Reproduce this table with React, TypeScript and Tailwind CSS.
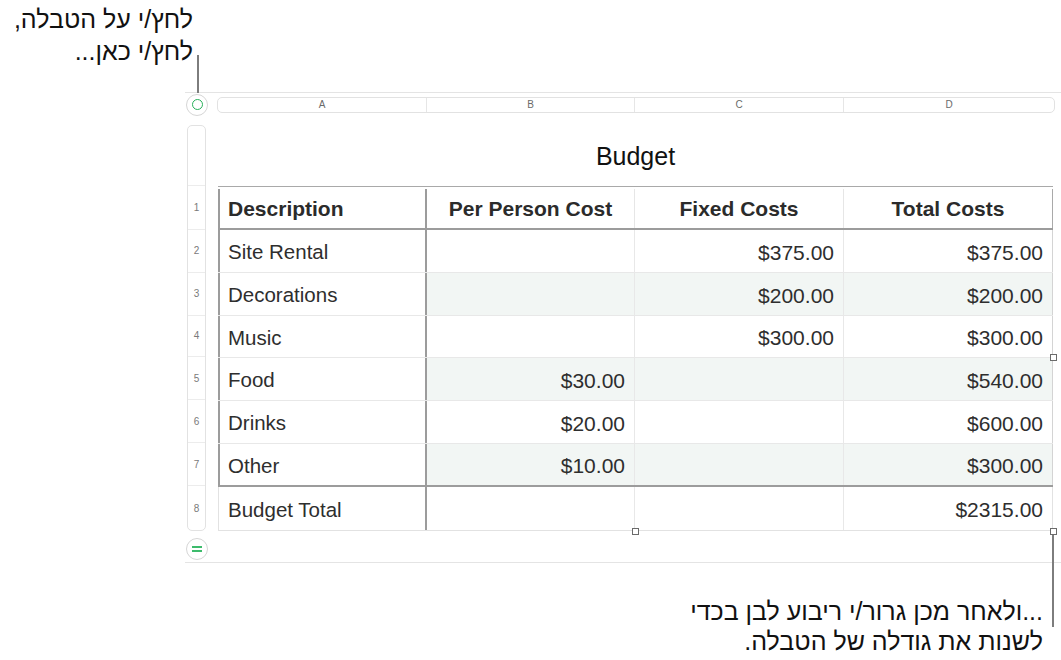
import React from "react";

type Row = {
  n: number;
  a: string;
  b: string;
  c: string;
  d: string;
  h: number;
  shade?: boolean;
};

const bodyRows: Row[] = [
  { n: 2, a: "Site Rental", b: "", c: "$375.00", d: "$375.00", h: 43 },
  { n: 3, a: "Decorations", b: "", c: "$200.00", d: "$200.00", h: 43, shade: true },
  { n: 4, a: "Music", b: "", c: "$300.00", d: "$300.00", h: 42 },
  { n: 5, a: "Food", b: "$30.00", c: "", d: "$540.00", h: 43, shade: true },
  { n: 6, a: "Drinks", b: "$20.00", c: "", d: "$600.00", h: 43 },
  { n: 7, a: "Other", b: "$10.00", c: "", d: "$300.00", h: 43, shade: true },
];

const rowHeights = [44, 43, 43, 42, 43, 43, 43, 44];

function Handle({ className }: { className: string }) {
  return (
    <div
      className={`absolute w-[7px] h-[7px] bg-white border border-[#6b6b6b] ${className}`}
    />
  );
}

export default function App() {
  return (
    <div className="relative w-[1061px] h-[660px] overflow-hidden bg-white font-['Liberation_Sans',_'Noto_Sans',_sans-serif] text-[#111]">
      {/* top callout */}
      <div
        dir="rtl"
        className="w-[193px] pt-[3px] text-right text-[25px] leading-[32px]"
      >
        <div>לחץ/י על הטבלה,</div>
        <div>לחץ/י כאן...</div>
      </div>
      <div className="absolute left-[197px] top-[55px] w-[2px] h-[38px] bg-[#7d7d7d]" />

      {/* sheet */}
      <div className="mt-[25px] ml-[185px] border-t border-b border-[#e4e4e4] pb-[2px]">
        {/* column header row */}
        <div className="flex items-center h-[23px]">
          <div className="ml-[1px] w-[22px] h-[22px] rounded-full border border-[#d6d6d6] flex items-center justify-center">
            <div className="w-[11px] h-[11px] rounded-full border-[1.5px] border-[#27b05a]" />
          </div>
          <div className="ml-[9px] w-[838px] h-[16px] rounded-[5px] border border-[#e2e2e2] flex text-[10px] text-[#6a6a6a]">
            <div className="w-[209px] flex items-center justify-center border-r border-[#e6e6e6]">A</div>
            <div className="w-[208px] flex items-center justify-center border-r border-[#e6e6e6]">B</div>
            <div className="w-[209px] flex items-center justify-center border-r border-[#e6e6e6]">C</div>
            <div className="flex-1 flex items-center justify-center">D</div>
          </div>
        </div>

        {/* body */}
        <div className="flex mt-[9px]">
          <div className="ml-[2px] w-[19px] h-[406px] rounded-[5px] border border-[#e2e2e2] flex flex-col text-[10px] text-[#7a7a7a]">
            <div className="h-[60px] border-b border-[#ececec]" />
            {rowHeights.map((h, i) => (
              <div
                key={i}
                style={{ height: h }}
                className={`flex items-center justify-center ${i < 7 ? "border-b border-[#ececec]" : ""}`}
              >
                {i + 1}
              </div>
            ))}
          </div>

          <div className="ml-[12px] w-[835px]">
            <div className="h-[61px] flex items-center justify-center pt-[3px] text-[25px] text-[#111]">
              Budget
            </div>

            <div className="relative text-[20.5px] text-[#2e2e2e]">
              {/* header row */}
              <div className="flex h-[44px] border-t border-[#a9a9a9] border-b-2 border-b-[#9c9c9c] font-bold text-[21px] text-[#2b2b2b] pt-[2px]">
                <div className="w-[209px] border-l-2 border-l-[#9c9c9c] border-r-2 border-r-[#9c9c9c] flex items-center pl-[8px]">
                  Description
                </div>
                <div className="w-[208px] border-r border-[#e6e6e6] flex items-center justify-center">
                  Per Person Cost
                </div>
                <div className="w-[209px] border-r border-[#e6e6e6] flex items-center justify-center">
                  Fixed Costs
                </div>
                <div className="flex-1 border-r border-[#a9a9a9] flex items-center justify-center">
                  Total Costs
                </div>
              </div>

              {bodyRows.map((r, i) => (
                <div
                  key={r.n}
                  style={{ height: r.h }}
                  className={`flex ${i < bodyRows.length - 1 ? "border-b border-[#e8e8e8]" : "border-b-2 border-b-[#9c9c9c]"}`}
                >
                  <div className="w-[209px] border-l-2 border-l-[#9c9c9c] border-r-2 border-r-[#9c9c9c] flex items-center pl-[8px] pt-[3px]">
                    {r.a}
                  </div>
                  <div
                    className={`w-[208px] border-r border-[#e8e8e8] flex items-center justify-end pr-[9px] pt-[3px] text-[21px] ${r.shade ? "bg-[#f2f6f4]" : ""}`}
                  >
                    {r.b}
                  </div>
                  <div
                    className={`w-[209px] border-r border-[#e8e8e8] flex items-center justify-end pr-[9px] pt-[3px] text-[21px] ${r.shade ? "bg-[#f2f6f4]" : ""}`}
                  >
                    {r.c}
                  </div>
                  <div
                    className={`flex-1 border-r border-[#d4d4d4] flex items-center justify-end pr-[9px] pt-[3px] text-[21px] ${r.shade ? "bg-[#f2f6f4]" : ""}`}
                  >
                    {r.d}
                  </div>
                </div>
              ))}

              {/* footer row */}
              <div className="flex h-[44px] border-b border-[#e2e2e2]">
                <div className="w-[209px] border-l border-[#e2e2e2] border-r-2 border-r-[#9c9c9c] flex items-center pl-[9px] pt-[3px]">
                  Budget Total
                </div>
                <div className="w-[208px] border-r border-[#e8e8e8]" />
                <div className="w-[209px] border-r border-[#e8e8e8]" />
                <div className="flex-1 border-r border-[#e2e2e2] flex items-center justify-end pr-[9px] pt-[3px] text-[21px]">
                  $2315.00
                </div>
              </div>

              <Handle className="right-[-4px] top-[168px]" />
              <Handle className="left-[414px] bottom-[-4px]" />
              <Handle className="right-[-4px] bottom-[-4px]" />
            </div>
          </div>
        </div>

        {/* add row button */}
        <div className="mt-[7px] ml-[1px] w-[22px] h-[22px] rounded-full border border-[#d6d6d6] flex flex-col items-center justify-center gap-[2px]">
          <div className="w-[10px] h-[2px] bg-[#3dbb6c]" />
          <div className="w-[10px] h-[2px] bg-[#3dbb6c]" />
        </div>
      </div>

      <div className="absolute left-[1052px] top-[535px] w-[2px] h-[92px] bg-[#7d7d7d]" />

      {/* bottom callout */}
      <div
        dir="rtl"
        className="mt-[33px] mr-[18px] text-right text-[25px] leading-[30px]"
      >
        <div>...ולאחר מכן גרור/י ריבוע לבן בכדי</div>
        <div>לשנות את גודלה של הטבלה.</div>
      </div>
    </div>
  );
}
